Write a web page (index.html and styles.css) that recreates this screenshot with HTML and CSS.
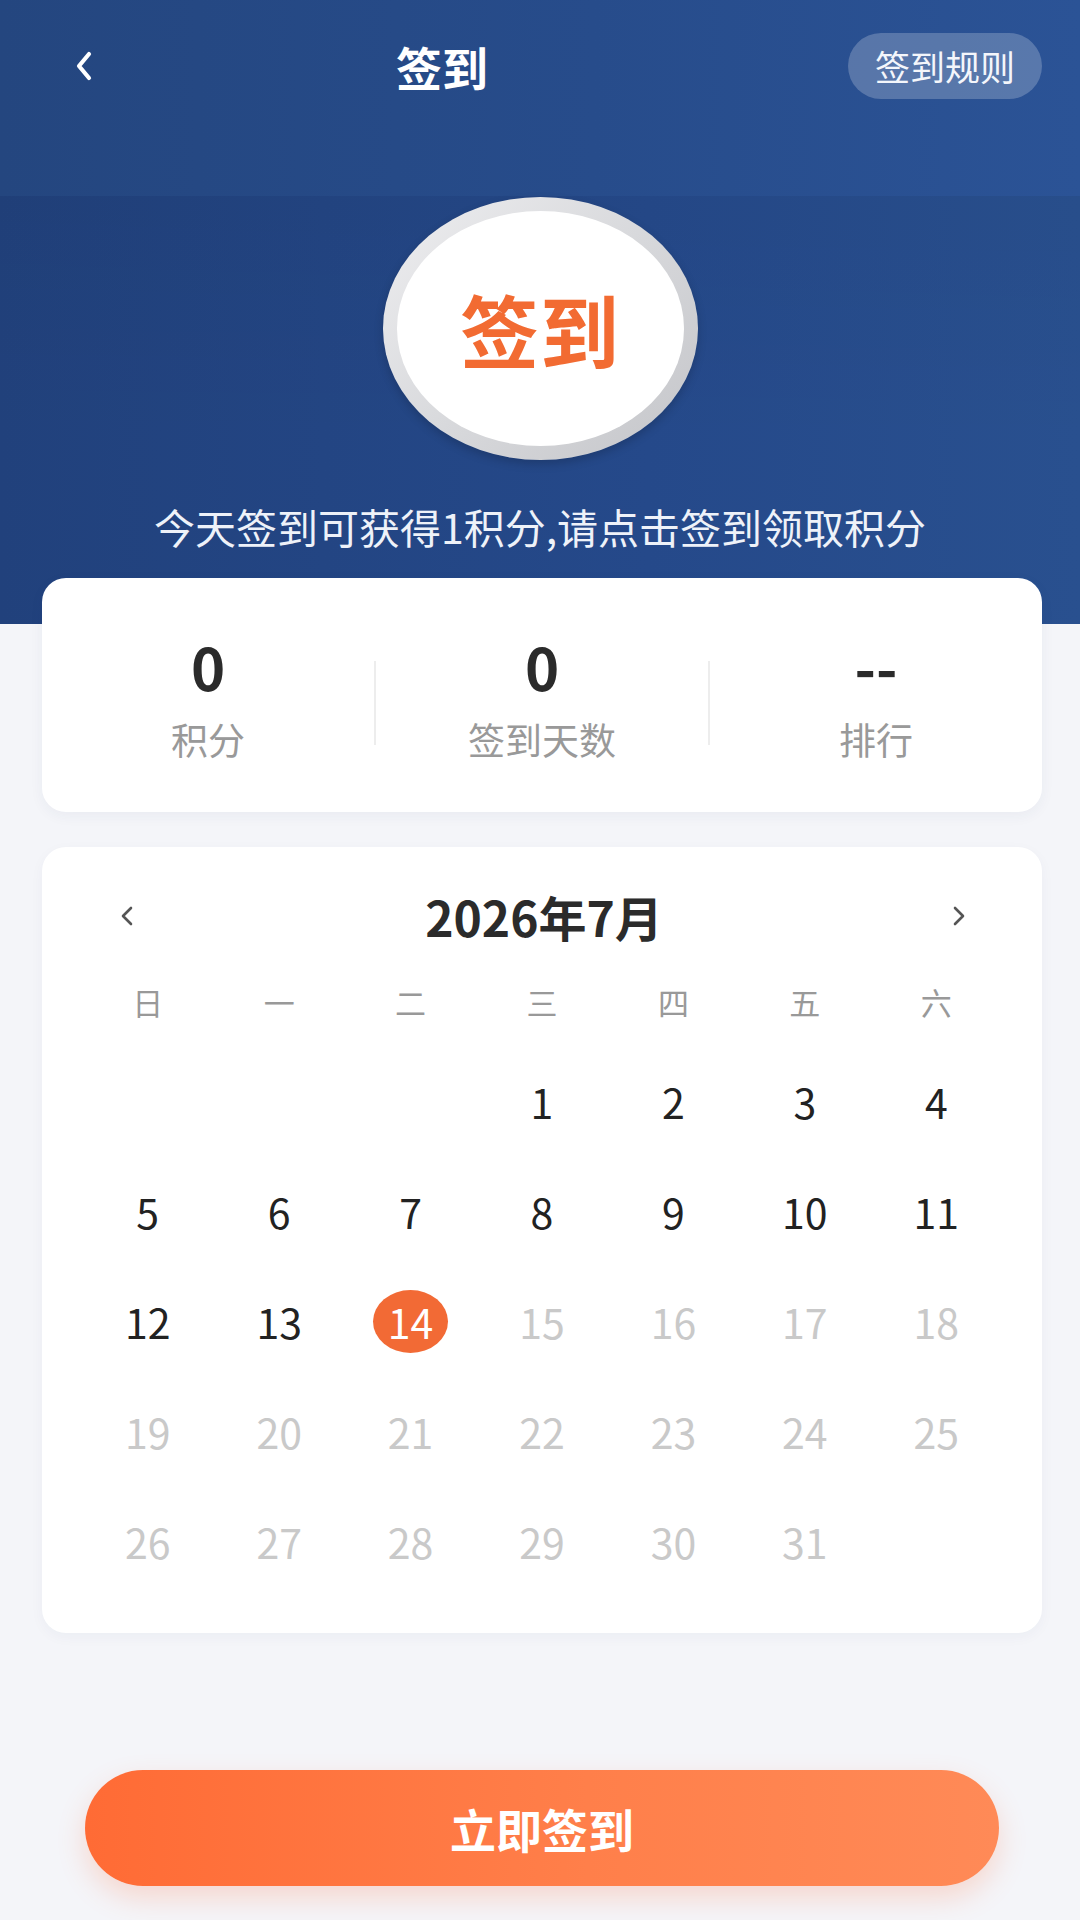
FILE: index.html
```html
<!DOCTYPE html>
<html lang="zh-CN">
<head>
<meta charset="utf-8">
<title>签到</title>
<link rel="stylesheet" href="styles.css">
</head>
<body>
<div class="page">
  <header class="header">
    <nav class="nav">
      <span class="back">
        <svg width="20" height="30" viewBox="0 0 20 30"><path d="M15 3 L5 15 L15 27" fill="none" stroke="#fff" stroke-width="4.2" stroke-linecap="round" stroke-linejoin="round"/></svg>
      </span>
      <h1 class="title">签到</h1>
      <span class="spacer"></span>
      <span class="rules">签到规则</span>
    </nav>
    <section class="hero">
      <div class="ring">
        <div class="disc">签到</div>
      </div>
      <p class="tip">今天签到可获得1积分,请点击签到领取积分</p>
    </section>
  </header>

  <section class="stats">
    <div class="stat"><div class="value">0</div><div class="label">积分</div></div>
    <div class="divider"></div>
    <div class="stat"><div class="value">0</div><div class="label">签到天数</div></div>
    <div class="divider"></div>
    <div class="stat"><div class="value">--</div><div class="label">排行</div></div>
  </section>

  <section class="calendar">
    <div class="cal-head">
      <svg class="arrow" width="16" height="20" viewBox="0 0 16 20"><path d="M12 2 L4 10 L12 18" fill="none" stroke="#555" stroke-width="2.6" stroke-linecap="round" stroke-linejoin="round"/></svg>
      <div class="month">2026年7月</div>
      <svg class="arrow" width="16" height="20" viewBox="0 0 16 20"><path d="M4 2 L12 10 L4 18" fill="none" stroke="#555" stroke-width="2.6" stroke-linecap="round" stroke-linejoin="round"/></svg>
    </div>
    <div class="weekdays">
      <span>日</span><span>一</span><span>二</span><span>三</span><span>四</span><span>五</span><span>六</span>
    </div>
    <div class="days">
      <span></span><span></span><span></span>
      <span class="past">1</span><span class="past">2</span><span class="past">3</span><span class="past">4</span>
      <span class="past">5</span><span class="past">6</span><span class="past">7</span><span class="past">8</span><span class="past">9</span><span class="past">10</span><span class="past">11</span>
      <span class="past">12</span><span class="past">13</span><span class="today"><i>14</i></span><span class="future">15</span><span class="future">16</span><span class="future">17</span><span class="future">18</span>
      <span class="future">19</span><span class="future">20</span><span class="future">21</span><span class="future">22</span><span class="future">23</span><span class="future">24</span><span class="future">25</span>
      <span class="future">26</span><span class="future">27</span><span class="future">28</span><span class="future">29</span><span class="future">30</span><span class="future">31</span><span></span>
    </div>
  </section>

  <div class="action">
    <button class="sign-btn">立即签到</button>
  </div>
</div>
</body>
</html>
```

FILE: styles.css
```css
* { box-sizing: border-box; }

html, body {
  margin: 0;
  padding: 0;
}

body {
  width: 1080px;
  height: 1920px;
  background: #f4f5f9;
  font-family: "Noto Sans CJK SC", "Noto Sans", sans-serif;
  color: #333;
  overflow: hidden;
}

.page {
  width: 1080px;
  height: 1920px;
  display: flex;
  flex-direction: column;
}

/* ---------- header ---------- */
.header {
  height: 624px;
  flex: none;
  display: flex;
  flex-direction: column;
}

.nav {
  height: 196px;
  flex: none;
  display: flex;
  align-items: center;
  align-self: stretch;
  padding: 0 38px 64px 74px;
  background: linear-gradient(90deg, #24467f 0%, #274c8b 55%, #2b5396 100%);
}

.back {
  width: 20px;
  height: 30px;
  display: flex;
}

.title {
  margin: 0 0 0 302px;
  font-size: 46px;
  font-weight: 700;
  color: #fff;
  line-height: 66px;
}

.spacer { flex: 1; }

.rules {
  height: 66px;
  padding: 0 27px;
  border-radius: 33px;
  background: rgba(255, 255, 255, 0.22);
  color: #f4f6fb;
  font-size: 35px;
  line-height: 66px;
}

.hero {
  flex: 1;
  display: flex;
  flex-direction: column;
  align-items: center;
  background:
    linear-gradient(180deg, rgba(0, 0, 0, 0.03) 0%, rgba(0, 0, 0, 0) 60%),
    linear-gradient(90deg, #21417c 0%, #25498a 60%, #29508f 100%);
}

.ring {
  margin-top: 1px;
  width: 315px;
  height: 263px;
  border-radius: 50%;
  padding: 14px;
  background: linear-gradient(135deg, #eeeef0 0%, #d8d9dc 50%, #c4c5c9 100%);
  box-shadow: 0 4px 10px rgba(0, 0, 0, 0.18);
}

.disc {
  width: 100%;
  height: 100%;
  border-radius: 50%;
  background: #fff;
  display: flex;
  align-items: center;
  justify-content: center;
  font-size: 79px;
  font-weight: 700;
  color: #f26b32;
  letter-spacing: 1px;
}

.tip {
  margin: 39px 0 0;
  font-size: 41px;
  line-height: 54px;
  color: #eef2f9;
}

/* ---------- stats card ---------- */
.stats {
  margin: -46px 38px 0 42px;
  height: 234px;
  flex: none;
  background: #fff;
  border-radius: 24px;
  display: grid;
  grid-template-columns: 1fr 2px 1fr 2px 1fr;
  align-items: center;
  box-shadow: 0 4px 14px rgba(30, 50, 90, 0.05);
}

.stat {
  display: flex;
  flex-direction: column;
  align-items: center;
  padding-top: 6px;
}

.value {
  font-size: 58px;
  font-weight: 700;
  line-height: 64px;
  color: #2b2b2b;
}

.label {
  margin-top: 18px;
  font-size: 37px;
  line-height: 46px;
  color: #999;
}

.divider {
  height: 84px;
  background: #ededed;
  margin-top: 16px;
}

/* ---------- calendar ---------- */
.calendar {
  margin: 35px 38px 0 42px;
  height: 786px;
  flex: none;
  background: #fff;
  border-radius: 24px;
  padding: 34px 40px 32px;
  box-shadow: 0 4px 14px rgba(30, 50, 90, 0.04);
}

.cal-head {
  height: 70px;
  margin: 0 35px 0 37px;
  display: flex;
  align-items: center;
  justify-content: space-between;
}

.month {
  font-size: 48px;
  font-weight: 700;
  color: #2b2b2b;
  padding-left: 2px;
}

.weekdays {
  margin-top: 20px;
  height: 60px;
  display: grid;
  grid-template-columns: repeat(7, 1fr);
  align-items: center;
  text-align: center;
  font-size: 31px;
  color: #999;
}

.days {
  margin-top: 15px;
  display: grid;
  grid-template-columns: repeat(7, 1fr);
  grid-auto-rows: 110px;
  font-size: 41px;
}

.days span {
  display: flex;
  align-items: center;
  justify-content: center;
}

.past { color: #222; }
.future { color: #c9c9c9; }

.today i {
  font-style: normal;
  width: 75px;
  height: 63px;
  border-radius: 50%;
  background: #f26a35;
  color: #fff;
  display: flex;
  align-items: center;
  justify-content: center;
}

/* ---------- action ---------- */
.action {
  margin: 137px 81px 0 85px;
  flex: none;
}

.sign-btn {
  width: 100%;
  height: 116px;
  border: none;
  border-radius: 58px;
  background: linear-gradient(90deg, #ff6b35 0%, #ff7f4a 55%, #ff8a57 100%);
  box-shadow: 0 12px 28px rgba(255, 110, 60, 0.22);
  color: #fff;
  font-family: "Noto Sans CJK SC", "Noto Sans", sans-serif;
  font-size: 46px;
  font-weight: 700;
  padding: 0;
}
```
